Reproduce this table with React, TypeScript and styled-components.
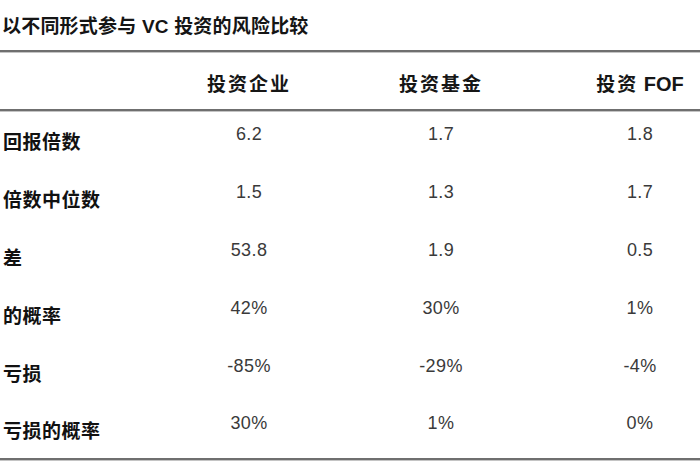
import React from "react";
import styled, { createGlobalStyle } from "styled-components";

const Global = createGlobalStyle`
  html, body { margin: 0; padding: 0; background: #ffffff; }
  body { width: 700px; height: 470px; overflow: hidden; font-family: "Liberation Sans", "Noto Sans CJK SC", sans-serif; }
`;

const Page = styled.div`
  width: 700px;
  height: 470px;
  display: flex;
  flex-direction: column;
  background: #fff;
`;

const Title = styled.div`
  height: 50px;
  display: flex;
  align-items: center;
  padding: 0 0 2px 2px;
  box-sizing: border-box;
  font-size: 19px;
  font-weight: 700;
  color: #151515;
  letter-spacing: 0.2px;
`;

const Rule = styled.div`
  height: 2px;
  background: #6f6f6f;
  box-shadow: 0 1px 0 #c4c4c4;
`;

const Row = styled.div<{ $h: number }>`
  display: grid;
  grid-template-columns: 150px 198px 186px 166px;
  height: ${(p) => p.$h}px;
  align-items: center;
`;

const Label = styled.div`
  padding-left: 3px;
  padding-top: 2px;
  font-size: 19px;
  font-weight: 700;
  color: #111;
  letter-spacing: 0.5px;
`;

const Head = styled.div<{ $shift: number }>`
  text-align: center;
  padding-left: ${(p) => p.$shift}px;
  padding-top: 4px;
  font-size: 19px;
  font-weight: 700;
  color: #161616;
  letter-spacing: 2px;
`;

const Latin = styled.span`
  letter-spacing: 0;
  font-size: 20px;
`;

const Val = styled.div<{ $shift: number }>`
  text-align: center;
  padding-left: ${(p) => p.$shift}px;
  padding-bottom: 10px;
  font-size: 18px;
  color: #3a3a3a;
  letter-spacing: 0.4px;
`;

const shifts = [0, 0, 46];

const heads: React.ReactNode[] = [
  "投资企业",
  "投资基金",
  <>
    投资<Latin> FOF</Latin>
  </>,
];

const rows: [string, string[]][] = [
  ["回报倍数", ["6.2", "1.7", "1.8"]],
  ["倍数中位数", ["1.5", "1.3", "1.7"]],
  ["差", ["53.8", "1.9", "0.5"]],
  ["的概率", ["42%", "30%", "1%"]],
  ["亏损", ["-85%", "-29%", "-4%"]],
  ["亏损的概率", ["30%", "1%", "0%"]],
];

export default function App() {
  return (
    <Page>
      <Global />
      <Title>以不同形式参与 VC 投资的风险比较</Title>
      <Rule />
      <Row $h={57}>
        <div />
        {heads.map((h, i) => (
          <Head key={i} $shift={shifts[i]}>{h}</Head>
        ))}
      </Row>
      <Rule />
      {rows.map(([label, vals]) => (
        <Row key={label} $h={57.8}>
          <Label>{label}</Label>
          {vals.map((v, i) => (
            <Val key={i} $shift={shifts[i]}>{v}</Val>
          ))}
        </Row>
      ))}
      <Rule />
    </Page>
  );
}
